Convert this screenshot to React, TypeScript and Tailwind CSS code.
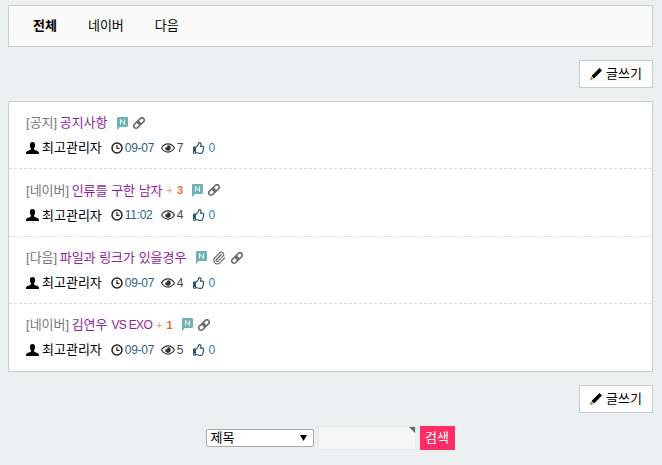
import { Paperclip } from "lucide-react"
import { FaRegEye, FaRegThumbsUp } from "react-icons/fa"

type Post = {
  category: string
  title: string
  latin?: string
  comments?: number
  clip?: boolean
  time: string
  views: number
}

const posts: Post[] = [
  { category: "공지", title: "공지사항", time: "09-07", views: 7 },
  { category: "네이버", title: "인류를 구한 남자", comments: 3, time: "11:02", views: 4 },
  { category: "다음", title: "파일과 링크가 있을경우", clip: true, time: "09-07", views: 4 },
  { category: "네이버", title: "김연우", latin: "VS EXO", comments: 1, time: "09-07", views: 5 },
]

function NewBadge() {
  return (
    <svg width="11" height="13" viewBox="0 0 11 13" className="shrink-0">
      <path d="M1 0h9a1 1 0 0 1 1 1v8a1 1 0 0 1-1 1H3l-3 3V1a1 1 0 0 1 1-1z" fill="#6fb2b6" />
      <path d="M3.500 7.500v-5l4 5v-5" fill="none" stroke="#fff" strokeWidth="1" />
    </svg>
  )
}

function UserIcon() {
  return (
    <svg width="13" height="12" viewBox="0 0 13 12" className="shrink-0">
      <path d="M6.500 0c1.700 0 2.600 1.200 2.600 3S8.400 6 8 6.600c-.2.500 0 1 .8 1.400 1.500.7 4.200 1.200 4.200 3v1H0v-1c0-1.800 2.700-2.300 4.200-3 .8-.4 1-.9.8-1.400C4.600 6 3.900 4.800 3.900 3S4.800 0 6.500 0z" fill="#000" />
    </svg>
  )
}

function PencilIcon() {
  return (
    <svg width="12" height="12" viewBox="0 0 12 12" className="shrink-0">
      <path d="M9.500 0 12 2.500 4 10.500 1.500 8z" fill="#000" />
      <path d="M1 8.700 3.300 11 0 12z" fill="#a8641e" />
    </svg>
  )
}

function ClockIcon() {
  return (
    <svg width="12" height="12" viewBox="0 0 12 12" className="ml-[9px] shrink-0">
      <circle cx="6" cy="6" r="5" fill="none" stroke="#222" strokeWidth="1.500" />
      <path d="M6 3v3.300h2.500" fill="none" stroke="#222" strokeWidth="1.200" />
    </svg>
  )
}

function ChainIcon() {
  return (
    <svg width="12" height="12" viewBox="0 0 14 14" className="shrink-0">
      <g transform="rotate(-45 7 7)" fill="none" stroke="#666" strokeWidth="1.800">
        <rect x="-0.500" y="4.300" width="8.500" height="5.400" rx="2.700" />
        <rect x="6" y="4.300" width="8.500" height="5.400" rx="2.700" />
      </g>
    </svg>
  )
}

function WriteButton() {
  return (
    <div className="flex justify-end">
      <button className="flex h-[28px] w-[74px] items-center justify-center gap-[4px] border border-[#ccc] bg-white text-[13px] text-black">
        <PencilIcon />
        글쓰기
      </button>
    </div>
  )
}

function PostRow({ post }: { post: Post }) {
  return (
    <li className="h-[67.33px] border-b border-dashed border-[#ddd] px-[17px] pt-[12px] last:border-b-0">
      <div className="flex h-[18px] items-center text-[13px]">
        <span className="text-[#777]">[{post.category}]</span>
        <span className="ml-[2.5px] text-[#8f1f9f]">
          {post.title}
          {post.latin && <span className="ml-[4px] text-[12px] tracking-[-0.7px]">{post.latin}</span>}
        </span>
        {post.comments && (
          <span className="ml-[4px] flex gap-[4px] text-[11px] font-bold text-[#f4681f]">
            <span className="font-normal text-[#f59a68]">+</span>
            {post.comments}
          </span>
        )}
        <span className="ml-[9px] flex items-center gap-[5px]">
          <NewBadge />
          {post.clip && <Paperclip className="size-[14px] text-[#666]" strokeWidth={2} />}
          <ChainIcon />
        </span>
      </div>
      <div className="mt-[7px] flex h-[18px] items-center text-[12px]">
        <UserIcon />
        <span className="ml-[3px] text-[13px] text-black">최고관리자</span>
        <ClockIcon />
        <span className="ml-[2px] w-[30px] text-[12px] tracking-[-0.3px] text-[#2f5f80]">{post.time}</span>
        <FaRegEye className="ml-[6px] size-[14px] text-[#333]" />
        <span className="ml-[2px] text-[#3a4a58]">{post.views}</span>
        <FaRegThumbsUp className="ml-[9px] size-[12px] text-[#2b4f6f]" />
        <span className="ml-[4px] text-[#2f7fb0]">0</span>
      </div>
    </li>
  )
}

export default function App() {
  return (
    <div className="h-[465px] overflow-hidden bg-[#ecf0f1] pl-[8px] pr-[9px] pt-[5px] font-['Liberation_Sans','Noto_Sans_CJK_KR',sans-serif]">
      <nav className="flex h-[42px] items-center gap-[31px] border border-[#ccc] bg-[#fafafa] pl-[24px] text-[13px] text-black">
        <span className="font-bold">전체</span>
        <span>네이버</span>
        <span>다음</span>
      </nav>

      <div className="mt-[13px]">
        <WriteButton />
      </div>

      <ul className="mt-[13px] h-[271px] border border-[#ccc] bg-white">
        {posts.map((post) => (
          <PostRow key={post.title} post={post} />
        ))}
      </ul>

      <div className="mt-[13px]">
        <WriteButton />
      </div>

      <form className="mt-[13px] flex items-center justify-center gap-[4px] pr-[1px]">
        <div className="flex h-[18px] w-[108px] items-center justify-between rounded-[2px] border border-[#aaa] bg-white pl-[4px] pr-[6px] text-[13px] text-black">
          제목
          <svg width="7" height="6" viewBox="0 0 7 6">
            <path d="M0 0h7L3.500 6z" fill="#000" />
          </svg>
        </div>
        <div className="relative h-[24px] w-[98px] border border-[#e6e9ea] bg-[#f6f6f6]">
          <span className="absolute right-0 top-0 border-l-[6px] border-t-[6px] border-l-transparent border-t-[#666]" />
        </div>
        <button type="button" className="h-[24px] w-[35px] bg-[#ff2d65] text-[13px] text-white">
          검색
        </button>
      </form>
    </div>
  )
}
